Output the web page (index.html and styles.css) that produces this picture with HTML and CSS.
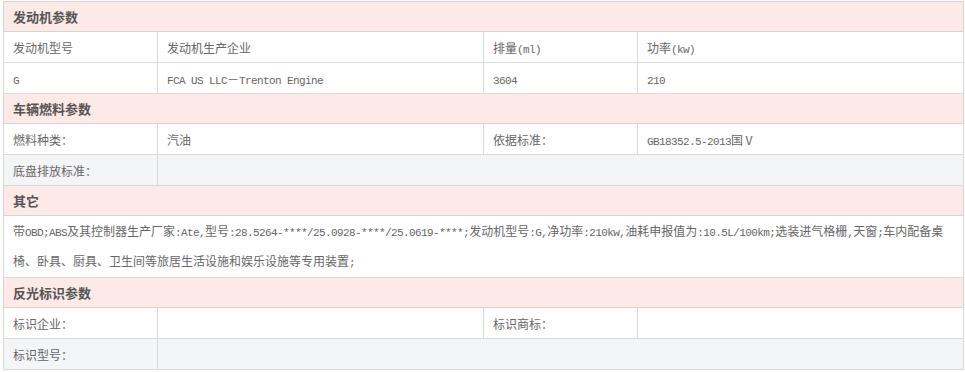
FILE: index.html
```html
<!DOCTYPE html>
<html lang="zh-CN">
<head>
<meta charset="utf-8">
<title>车辆参数</title>
<link rel="stylesheet" href="styles.css">
</head>
<body>
<table class="spec">
  <colgroup>
    <col class="c1"><col class="c2"><col class="c3"><col class="c4">
  </colgroup>
  <tr class="sec"><th colspan="4">发动机参数</th></tr>
  <tr>
    <td>发动机型号</td>
    <td>发动机生产企业</td>
    <td>排量<span class="en">(ml)</span></td>
    <td>功率<span class="en">(kw)</span></td>
  </tr>
  <tr>
    <td><span class="en">G</span></td>
    <td><span class="en">FCA US LLC</span>－<span class="en">Trenton Engine</span></td>
    <td><span class="en">3604</span></td>
    <td><span class="en">210</span></td>
  </tr>
  <tr class="sec"><th colspan="4">车辆燃料参数</th></tr>
  <tr>
    <td>燃料种类：</td>
    <td>汽油</td>
    <td>依据标准：</td>
    <td><span class="en">GB18352.5-2013</span>国Ⅴ</td>
  </tr>
  <tr class="alt">
    <td>底盘排放标准：</td>
    <td colspan="3"></td>
  </tr>
  <tr class="sec"><th colspan="4">其它</th></tr>
  <tr>
    <td colspan="4" class="note">带<span class="en">OBD;ABS</span>及其控制器生产厂家<span class="en">:Ate,</span>型号<span class="en">:28.5264-****/25.0928-****/25.0619-****;</span>发动机型号<span class="en">:G,</span>净功率<span class="en">:210kw,</span>油耗申报值为<span class="en">:10.5L/100km;</span>选装进气格栅<span class="en">,</span>天窗<span class="en">;</span>车内配备桌椅、卧具、厨具、卫生间等旅居生活设施和娱乐设施等专用装置<span class="en">;</span></td>
  </tr>
  <tr class="sec"><th colspan="4">反光标识参数</th></tr>
  <tr>
    <td>标识企业：</td>
    <td></td>
    <td>标识商标：</td>
    <td></td>
  </tr>
  <tr class="alt">
    <td>标识型号：</td>
    <td colspan="3"></td>
  </tr>
</table>
</body>
</html>
```

FILE: styles.css
```css
body {
  margin: 0;
  background: #fff;
  font-family: "Noto Sans CJK SC", sans-serif;
  font-size: 12px;
  color: #666;
}

.spec {
  margin: 1px 0 0 3px;
  width: 960px;
  border-collapse: collapse;
  table-layout: fixed;
}

.c1 { width: 154px; }
.c2 { width: 326px; }
.c3 { width: 154px; }
.c4 { width: 326px; }

.spec td,
.spec th {
  border: 1px solid #dadada;
  padding: 0 9px;
  height: 30px;
  text-align: left;
  vertical-align: middle;
  white-space: nowrap;
}

.spec th {
  height: 29px;
  background: #fdeae7;
  border-color: #d4d4d4;
  color: #555;
  font-size: 13px;
  font-weight: bold;
}

.spec .alt td {
  background: #f4f5f7;
}

.spec td.note {
  white-space: normal;
  line-height: 30px;
  height: auto;
  padding: 0 9px 1px;
}

.en {
  font-family: "Liberation Mono", monospace;
  font-size: 11px;
  line-height: 1;
  letter-spacing: -0.6px;
}
```
